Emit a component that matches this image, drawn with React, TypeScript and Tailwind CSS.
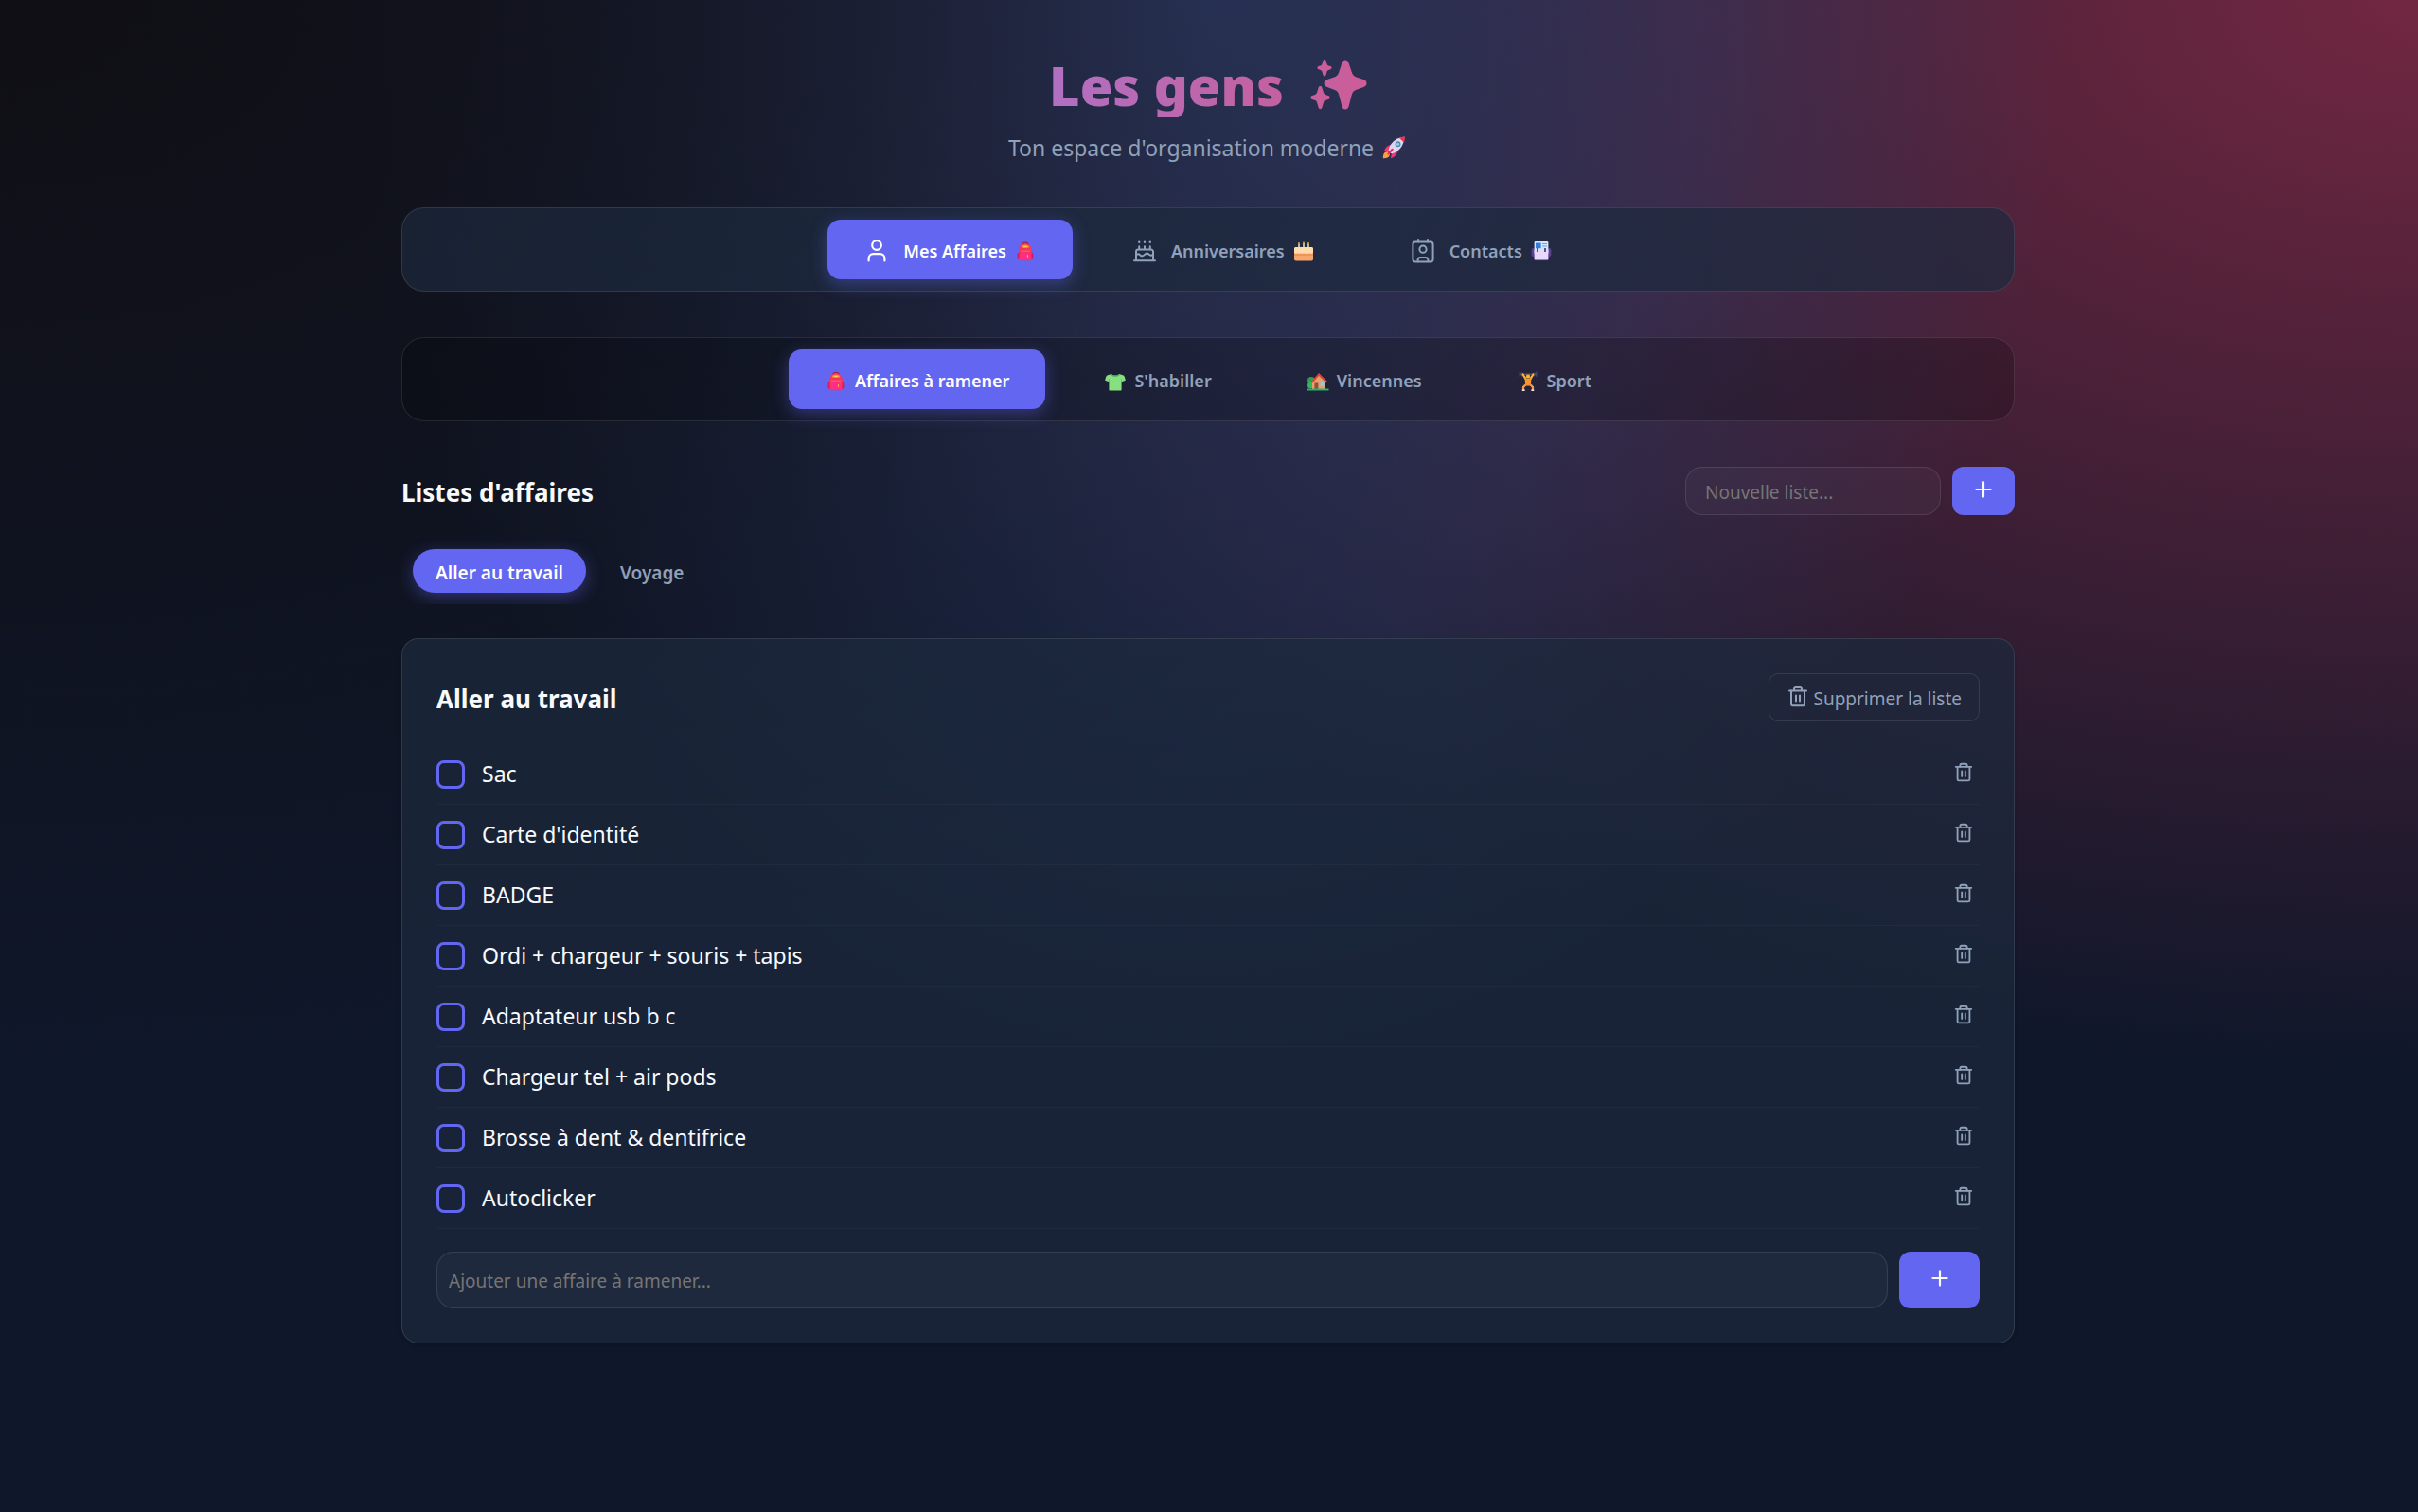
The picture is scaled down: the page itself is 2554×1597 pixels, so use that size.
import { useState } from "react";
import type { ReactNode } from "react";
import { Plus } from "lucide-react";

const UserIcon = () => (
  <svg viewBox="0 0 28 28" className="size-7 shrink-0" fill="none" stroke="currentColor" strokeWidth="2.2" strokeLinecap="round">
    <circle cx="14" cy="8" r="4.8" />
    <path d="M5.600 24.500v-2.600a4.800 4.800 0 0 1 4.800-4.800h7.200a4.800 4.800 0 0 1 4.800 4.800v2.600" />
  </svg>
);

const CakeIcon = () => (
  <svg viewBox="0 0 28 28" className="size-7 shrink-0" fill="none" stroke="currentColor" strokeWidth="2" strokeLinecap="round" strokeLinejoin="round">
    <path d="M3 24.2h22" />
    <path d="M5 24v-9.2a2.4 2.4 0 0 1 2.4-2.4h13.2a2.4 2.4 0 0 1 2.4 2.4V24" />
    <path d="M5 18.2c1.6-1.4 3-1.2 4.4.2 1.4 1.3 2.4 1.2 3.8.1l1.6-1.2c1.3-1 2.4-.9 3.6.2 1.6 1.4 3 1.6 4.6.4" />
    <path d="M8.2 9.2v3M14 9.2v3M19.8 9.2v3" />
    <path d="M8.2 4.6v.1M14 4.6v.1M19.8 4.6v.1" strokeWidth="2.4" />
  </svg>
);

const ContactIcon = () => (
  <svg viewBox="0 0 28 28" className="size-7 shrink-0" fill="none" stroke="currentColor" strokeWidth="2" strokeLinecap="round" strokeLinejoin="round">
    <rect x="3.4" y="4.6" width="21.2" height="20.8" rx="2.6" />
    <path d="M9 2V4.600M19 2V4.600" />
    <circle cx="14" cy="12.2" r="3.6" />
    <path d="M8.600 25.200v-1.800a2.400 2.400 0 0 1 2.400-2.400h6a2.400 2.400 0 0 1 2.400 2.400v1.800" />
  </svg>
);

const TrashIcon = ({ className }: { className: string }) => (
  <svg viewBox="0 0 24 24" className={className} fill="none" stroke="currentColor" strokeWidth="2" strokeLinecap="round" strokeLinejoin="round">
    <path d="M3 6.4h18" />
    <path d="M8 6.2V4.8A1.8 1.8 0 0 1 9.800 3h4.400A1.800 1.800 0 0 1 16 4.800v1.400" />
    <path d="M5 6.600v14a1.600 1.600 0 0 0 1.600 1.600h10.800a1.600 1.600 0 0 0 1.600-1.600v-14" />
    <path d="M10 11.400v6M14 11.400v6" />
  </svg>
);

const Emoji = ({ label, className = "size-6", children }: { label: string; className?: string; children: ReactNode }) => (
  <svg viewBox="0 0 24 24" role="img" aria-label={label} className={`${className} shrink-0`}>
    {children}
  </svg>
);

const Backpack = () => (
  <Emoji label="sac à dos">
    <path d="M9 5.5C9 2.6 15 2.6 15 5.5" fill="none" stroke="#a3264f" strokeWidth="1.4" />
    <path d="M5 12c0-5 2.8-7.6 7-7.6s7 2.600 7 7.600v8.200c0 1.300-.8 2-2 2H7c-1.200 0-2-.7-2-2z" fill="#f4355f" />
    <path d="M3.600 15.500c0-1.300.7-2 1.800-2v7.500c-1.200 0-1.800-.8-1.800-2zM20.400 15.500c0-1.300-.7-2-1.800-2v7.500c1.200 0 1.800-.8 1.800-2z" fill="#d81b60" />
    <path d="M7.500 8.200c1-2 2.500-2.600 4.500-2.600s3.500.6 4.500 2.600c-2.600 1-6.400 1-9 0z" fill="#ff8a3c" />
    <path d="M10 7.400h4" stroke="#ffcc4d" strokeWidth="1.200" />
    <rect x="6.600" y="14.200" width="10.800" height="7" rx="1.800" fill="#ff2e88" />
    <path d="M7 12.200h10" stroke="#ff6b6b" strokeWidth="1" />
    <path d="M14.500 16.200v2.600" stroke="#ffb03a" strokeWidth="1" />
  </Emoji>
);

const BirthdayCake = () => (
  <Emoji label="gâteau">
    <path d="M7 4.500v5M12 4v5M17 4.500v5" stroke="#f5e8a8" strokeWidth="1.500" />
    <path d="M7 3v1.800M12 2.500v1.800M17 3v1.800" stroke="#ffc83d" strokeWidth="1.200" />
    <rect x="2" y="8.500" width="20" height="14" rx="1.800" fill="#f9a66c" />
    <path d="M2 15.500h20v1H2z" fill="#e0854a" />
    <path d="M2 9.600C2 8.400 3 8 4 8h16c1 0 2 .4 2 1.600v4.200c-1.200 1.800-2.600 1.400-3.300 0-1 1.700-2.500 1.700-3.400 0-1 1.700-2.400 1.700-3.300 0-1 1.700-2.400 1.700-3.300 0-1 1.700-2.400 1.700-3.400 0-.7 1.400-2.200 1.600-3.300 0z" fill="#ffdcae" />
  </Emoji>
);

const CardIndex = () => (
  <Emoji label="carnet">
    <rect x="1.600" y="9" width="20.800" height="9" rx="2" fill="#5b3f93" />
    <path d="M4 15h16v6c0 .8-.5 1.300-1.300 1.300H5.300c-.8 0-1.300-.5-1.300-1.300z" fill="#46307a" />
    <rect x="4.600" y="2" width="14.800" height="13" rx="1" fill="#d3e4fb" />
    <rect x="6" y="3.600" width="5.600" height="5.600" fill="#2f7fe0" />
    <path d="M13 4.500h5M13 7h5" stroke="#6da5ea" strokeWidth="1.200" />
    <rect x="4.600" y="10.500" width="14.800" height="11" rx="1" fill="#e8d8fa" />
    <path d="M8 9v4M16 9v4" stroke="#33245c" strokeWidth="1.500" />
  </Emoji>
);

const Shirt = () => (
  <Emoji label="t-shirt">
    <path d="M8 5c1.500 2 6.500 2 8 0l4.600 1.600c1 .4 1.600 2.400 2.200 5.200l-4.200 1.400V21.500c0 .6-.4 1-1 1H6.400c-.6 0-1-.4-1-1v-8.300L1.200 11.800C1.800 9 2.400 7 3.400 6.600z" fill="#86e07f" />
    <path d="M8 5c1.500 2 6.500 2 8 0l1 .4c-1.600 3.200-8.400 3.200-10 0z" fill="#4fae58" />
    <path d="M5.400 13.200V10M18.600 13.200V10" stroke="#58ba60" strokeWidth=".8" />
  </Emoji>
);

const House = () => (
  <Emoji label="maison">
    <circle cx="5" cy="12" r="4" fill="#2f9e4f" />
    <circle cx="4.500" cy="17" r="3.500" fill="#37b45c" />
    <path d="M6 12.500 13 5.500l7 7V21H6z" fill="#e9a06f" />
    <path d="M4.600 13.500 13 4l9.400 9.200-1.600 1.300L13 7l-6.800 7.800z" fill="#d8483e" />
    <rect x="8.400" y="14.500" width="4" height="6.500" fill="#94513a" />
    <rect x="14.600" y="14" width="3.800" height="4" fill="#7fd0ea" />
    <path d="M.5 20.500h23v2H.5z" fill="#22b573" />
  </Emoji>
);

const Lifter = () => (
  <Emoji label="haltères">
    <path d="M3 5.200h18" stroke="#60646f" strokeWidth="1.200" />
    <path d="M3.300 2.800v5M20.700 2.800v5M5.400 3.400v3.800M18.600 3.400v3.800" stroke="#3f4370" strokeWidth="1.600" />
    <path d="M6.600 5.500 10 11M17.400 5.500 14 11" stroke="#ffb52e" strokeWidth="2.200" strokeLinecap="round" />
    <circle cx="12" cy="7.600" r="2.200" fill="#ffb02e" />
    <path d="M8.600 10h6.800l-.6 7.500H9.200z" fill="#f9932c" />
    <path d="M9.400 16.500 7 19v2.500M14.600 16.500 17 19v2.500" stroke="#f0a050" strokeWidth="2.200" fill="none" />
    <path d="M5.800 22.200h2.800M15.400 22.200h2.800" stroke="#f2ebe6" strokeWidth="1.800" />
  </Emoji>
);

const Rocket = () => (
  <Emoji label="fusée" className="size-7">
    <path d="M3 16.500c1.500-1.500 4-1 4.600.4.500 1.500-.4 3.400-2 4.100-1.300.6-3 .8-4 .6-.2-1.600.1-3.700 1.400-5.100z" fill="#f9a03f" />
    <path d="M9.500 8.600 5.200 11c-1.200.7-2.600 3.200-2.600 4.600l5-1.400zM15.400 14.500 13 18.800c-.7 1.200-3.200 2.600-4.600 2.600l1.400-5z" fill="#f4357a" />
    <path d="M6.400 14.800c1-6.200 6-11.600 14.600-12.600C20.600 10.400 15.600 16.200 9.200 17.600z" fill="#ddd5ec" />
    <path d="M16.400 3.400c1.500-.6 3-1 4.900-1.200.2 1.900-.2 3.500-.8 5z" fill="#f0304f" />
    <circle cx="15" cy="8.800" r="2.500" fill="#4f86b5" />
    <circle cx="15" cy="8.800" r="1.300" fill="#8ed1ef" />
    <path d="M6.400 17.600 10 13.500" stroke="#e82c68" strokeWidth="1.800" strokeLinecap="round" />
  </Emoji>
);

const Sparkles = () => (
  <svg viewBox="0 0 60 56" role="img" aria-label="étincelles" className="h-14 w-15 shrink-0">
    <defs>
      <linearGradient id="sparkle" x1="0" x2="1">
        <stop offset="0" stopColor="#c4609f" />
        <stop offset="1" stopColor="#cf5c96" />
      </linearGradient>
    </defs>
    <g fill="url(#sparkle)">
      <path d="M37 1.500c2 0 3 1.300 3.600 3.200l3.200 9.600c1 3 2.200 4.200 5 5.200l7.500 2.600c2 .8 3.200 2 3.200 4s-1.200 3.200-3.200 4l-7.500 2.700c-2.800 1-4 2.200-5 5.200l-3.200 12.200c-.6 2-1.600 3.300-3.600 3.300s-3-1.300-3.600-3.300L30.200 38c-1-3-2.200-4.200-5-5.200l-7.400-2.700c-2-.8-3.200-2-3.200-4s1.200-3.200 3.200-4l7.400-2.600c2.800-1 4-2.200 5-5.200l3.200-9.600c.6-1.900 1.600-3.200 3.600-3.200z" />
      <path d="M15 1c.9 0 1.400.5 1.600 1.400l.9 3.200c.3 1 .8 1.500 1.700 1.800l2 .7c.8.300 1.300.8 1.300 1.600s-.5 1.300-1.300 1.600l-2 .7c-.9.3-1.400.8-1.700 1.800l-.9 3.200c-.2.900-.7 1.400-1.600 1.400s-1.400-.5-1.600-1.400l-.9-3.200c-.3-1-.8-1.500-1.700-1.800l-2-.7c-.8-.3-1.300-.8-1.300-1.600s.5-1.300 1.300-1.600l2-.7c.9-.3 1.400-.8 1.700-1.800l.9-3.200C13.600 1.500 14.100 1 15 1z" />
      <path d="M10.500 29c1 0 1.600.6 1.900 1.600l1.500 5c.4 1.300 1 1.900 2.100 2.300l3 1.100c1 .4 1.600 1 1.600 2s-.6 1.600-1.600 2l-3 1.100c-1.100.4-1.700 1-2.100 2.300l-1.500 5.200c-.3 1-.9 1.600-1.900 1.600s-1.600-.6-1.900-1.600l-1.500-5.200c-.4-1.300-1-1.900-2.100-2.300l-3-1.100c-1-.4-1.600-1-1.600-2s.6-1.600 1.600-2l3-1.100c1.100-.4 1.700-1 2.100-2.300l1.500-5c.3-1 .9-1.600 1.900-1.600z" />
    </g>
  </svg>
);

const pages = [
  { label: "Mes Affaires", icon: <UserIcon />, emoji: <Backpack /> },
  { label: "Anniversaires", icon: <CakeIcon />, emoji: <BirthdayCake /> },
  { label: "Contacts", icon: <ContactIcon />, emoji: <CardIndex /> },
];

const categories = [
  { label: "Affaires à ramener", emoji: <Backpack /> },
  { label: "S'habiller", emoji: <Shirt /> },
  { label: "Vincennes", emoji: <House /> },
  { label: "Sport", emoji: <Lifter /> },
];

const lists = ["Aller au travail", "Voyage"];

const items = [
  "Sac",
  "Carte d'identité",
  "BADGE",
  "Ordi + chargeur + souris + tapis",
  "Adaptateur usb b c",
  "Chargeur tel + air pods",
  "Brosse à dent & dentifrice",
  "Autoclicker",
];

const active = "bg-[#6366f1] text-white shadow-[0_5px_18px_rgba(99,102,241,0.4)]";
const inactive = "text-slate-400";

const App = () => {
  const [page, setPage] = useState("Mes Affaires");
  const [category, setCategory] = useState("Affaires à ramener");
  const [list, setList] = useState("Aller au travail");

  return (
    <div className="min-h-screen bg-[#0f172a] bg-[radial-gradient(at_0%_0%,hsl(253_16%_7%)_0,transparent_50%),radial-gradient(at_50%_0%,hsl(225_39%_30%)_0,transparent_50%),radial-gradient(at_100%_0%,hsl(339_49%_30%)_0,transparent_50%)] pr-[50px] pb-12 pl-12 font-['Noto_Sans',sans-serif] text-slate-50">
      <div className="mx-auto max-w-[1704px]">
        <header className="flex flex-col items-center gap-4 pt-14 pb-[47px]">
          <h1 className="flex items-center gap-7 text-[56px] leading-[68px] font-black">
            <span className="bg-linear-to-r from-[#b070c2] to-[#c4609f] bg-clip-text text-transparent">
              Les gens
            </span>
            <Sparkles />
          </h1>
          <p className="flex items-center gap-2 text-[23px] leading-8 text-slate-400">
            Ton espace d'organisation moderne <Rocket />
          </p>
        </header>

        <nav className="flex justify-center gap-6 rounded-3xl border border-white/10 bg-slate-800/70 p-3">
          {pages.map(({ label, icon, emoji }) => (
            <button
              key={label}
              onClick={() => setPage(label)}
              className={`flex h-[63px] items-center gap-3.5 rounded-[14px] px-[38px] pt-0.5 text-lg font-semibold ${page === label ? active : inactive}`}
            >
              {icon}
              <span className="flex items-center gap-2">
                {label} {emoji}
              </span>
            </button>
          ))}
        </nav>

        <nav className="mt-12 flex justify-center gap-6 rounded-3xl border border-white/10 bg-black/20 p-3">
          {categories.map(({ label, emoji }) => (
            <button
              key={label}
              onClick={() => setCategory(label)}
              className={`flex h-[63px] items-center gap-2 rounded-[14px] px-[38px] pt-0.5 text-lg font-semibold ${category === label ? active : inactive}`}
            >
              {emoji} {label}
            </button>
          ))}
        </nav>

        <main>
          <div className="mt-12 flex items-center justify-between">
            <h2 className="pt-1 text-[26px] font-bold">Listes d'affaires</h2>
            <form className="flex gap-3" onSubmit={(e) => e.preventDefault()}>
              <input
                aria-label="Nouvelle liste"
                placeholder="Nouvelle liste..."
                className="h-[51px] w-[270px] rounded-[18px] border border-white/10 bg-white/[0.03] px-5 pt-0.5 text-[19px] placeholder:text-[#757575]"
              />
              <button aria-label="Créer la liste" className="flex w-[66px] items-center justify-center rounded-xl bg-[#6366f1] pb-1">
                <Plus size={26} strokeWidth={2} />
              </button>
            </form>
          </div>

          <div className="mt-6 flex gap-3 overflow-hidden p-3">
            {lists.map((name) => (
              <button
                key={name}
                onClick={() => setList(name)}
                className={`flex h-[46px] items-center rounded-full px-6 pt-1 text-[19px] font-semibold ${list === name ? active : inactive}`}
              >
                {name}
              </button>
            ))}
          </div>

          <section className="mt-9 rounded-[18px] border border-white/10 bg-slate-800/70 p-9 shadow-md">
            <div className="flex items-center justify-between">
              <h3 className="pt-1 text-[26px] font-bold">{list}</h3>
              <button className="flex h-[51px] items-center gap-1 rounded-[10px] border border-white/10 px-[18px] text-[19px] text-slate-400">
                <TrashIcon className="mb-1 size-6" />
                <span className="pt-1">Supprimer la liste</span>
              </button>
            </div>

            <ul className="mt-6">
              {items.map((item) => (
                <li key={item} className="flex h-16 items-center justify-between border-b border-white/[0.03]">
                  <label className="flex items-center gap-[18px] text-[23px]">
                    <input type="checkbox" className="size-[30px] appearance-none rounded-lg border-3 border-[#6366f1] checked:bg-[#6366f1]" />
                    {item}
                  </label>
                  <button aria-label={`Supprimer ${item}`} className="px-1.5 pb-1.5 text-slate-400">
                    <TrashIcon className="size-[22px]" />
                  </button>
                </li>
              ))}
            </ul>

            <form className="mt-6 flex gap-3" onSubmit={(e) => e.preventDefault()}>
              <input
                aria-label="Ajouter une affaire à ramener"
                placeholder="Ajouter une affaire à ramener..."
                className="h-[60px] min-w-0 flex-1 rounded-[18px] border border-white/10 bg-white/[0.03] px-3 pt-0.5 text-[19px] placeholder:text-[#757575]"
              />
              <button aria-label="Ajouter" className="flex w-[85px] items-center justify-center rounded-xl bg-[#6366f1] pb-1">
                <Plus size={26} strokeWidth={2} />
              </button>
            </form>
          </section>
        </main>
      </div>
    </div>
  );
};

export default App;
